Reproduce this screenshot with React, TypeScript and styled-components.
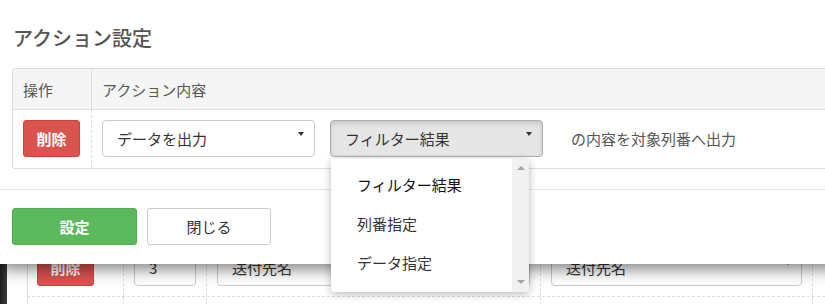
import React from 'react';
import styled, { createGlobalStyle } from 'styled-components';

const GlobalStyle = createGlobalStyle`
  html, body {
    margin: 0;
    padding: 0;
    height: 304px;
    overflow: hidden;
    background: #fff;
    font-family: "Noto Sans CJK JP", "Noto Sans", sans-serif;
  }
  * { box-sizing: border-box; }
`;

/* ---------- page behind the dialog ---------- */

const Page = styled.div`
  position: relative;
  display: flex;
  height: 304px;
  overflow: hidden;
`;

const SideEdge = styled.div`
  width: 7px;
  flex-shrink: 0;
  background: linear-gradient(to right, #1e1e1e, #3b3b3b);
`;

const PageMain = styled.main`
  flex: 1;
  padding: 239px 0 0 20px;
  background: #fff;
`;

const BgRow = styled.div`
  display: grid;
  grid-template-columns: 96px 83px 334px 272px;
  min-height: 57px;
  border-left: 1px solid #ddd;
  border-bottom: 1px dashed #ddd;
`;

const BgCell = styled.div<{ $pad?: number }>`
  padding: 10px ${p => p.$pad ?? 10}px;
  border-right: 1px dashed #ddd;
  display: flex;
  align-items: center;
`;

/* ---------- shared controls ---------- */

const Button = styled.button<{ $kind: 'danger' | 'success' | 'default'; $w: number }>`
  width: ${p => p.$w}px;
  height: 37px;
  padding: 0;
  border-radius: 3px;
  font-family: inherit;
  font-size: 15px;
  font-weight: ${p => (p.$kind === 'default' ? 400 : 700)};
  cursor: pointer;
  color: ${p => (p.$kind === 'default' ? '#333' : '#fff')};
  background: ${p =>
    p.$kind === 'danger' ? '#d9534f' : p.$kind === 'success' ? '#5cb85c' : '#fff'};
  border: 1px solid
    ${p => (p.$kind === 'danger' ? '#d43f3a' : p.$kind === 'success' ? '#4cae4c' : '#ccc')};
`;

const Select = styled.div<{ $w: number; $active?: boolean }>`
  width: ${p => p.$w}px;
  height: 37px;
  display: flex;
  align-items: center;
  justify-content: space-between;
  padding: 0 10px 0 14px;
  font-size: 15px;
  color: #333;
  border-radius: 4px;
  border: 1px solid ${p => (p.$active ? '#adadad' : '#ccc')};
  background: ${p => (p.$active ? '#e6e6e6' : '#fff')};
  box-shadow: ${p => (p.$active ? 'inset 0 3px 5px rgba(0,0,0,.125)' : 'none')};
`;

const Caret = styled.span`
  width: 0;
  height: 0;
  margin-bottom: 10px;
  border-left: 3px solid transparent;
  border-right: 3px solid transparent;
  border-top: 4px solid #333;
`;

const TextInput = styled.div`
  width: 62px;
  height: 37px;
  display: flex;
  align-items: center;
  padding-left: 14px;
  font-size: 15px;
  color: #333;
  border: 1px solid #ccc;
  border-radius: 4px;
  background: #fff;
`;

/* ---------- dialog ---------- */

const Modal = styled.div`
  position: absolute;
  top: 0;
  left: 0;
  width: 880px;
  background: #fff;
  box-shadow: 0 5px 15px rgba(0, 0, 0, 0.5);
  z-index: 5;
`;

const ModalHeader = styled.div`
  padding: 24px 12px 0 13px;
`;

const Title = styled.h4`
  margin: 0;
  font-size: 20px;
  line-height: 28px;
  font-weight: 500;
  color: #555;
`;

const ModalBody = styled.div`
  padding: 16px 0 20px 12px;
`;

const Table = styled.div`
  border: 1px solid #ddd;
  border-radius: 3px;
  display: grid;
  grid-template-columns: 79px 1fr;
`;

const HeadCell = styled.div<{ $first?: boolean }>`
  height: 41px;
  display: flex;
  align-items: center;
  padding-left: 10px;
  font-size: 15px;
  color: #555;
  background: #f5f5f5;
  border-bottom: 1px solid #ddd;
  border-right: ${p => (p.$first ? '1px solid #ddd' : 'none')};
`;

const BodyCell = styled.div<{ $first?: boolean }>`
  display: flex;
  align-items: center;
  gap: 15px;
  padding: 10px 0 11px 10px;
  border-right: ${p => (p.$first ? '1px dashed #ddd' : 'none')};
`;

const Note = styled.span`
  padding-left: 13px;
  font-size: 15px;
  color: #555;
`;

const SelectWrap = styled.div`
  position: relative;
`;

const Listbox = styled.div`
  position: absolute;
  top: calc(100% + 2px);
  left: 1px;
  width: 198px;
  height: 133px;
  display: flex;
  background: #fff;
  border-radius: 0 0 3px 3px;
  box-shadow: 0 2px 8px rgba(0, 0, 0, 0.28);
  overflow: hidden;
  z-index: 10;
`;

const Options = styled.ul`
  flex: 1;
  margin: 0;
  padding: 6px 0 0 26px;
  list-style: none;
`;

const Option = styled.li<{ $selected?: boolean }>`
  height: 39px;
  line-height: 39px;
  font-size: 15px;
  color: ${p => (p.$selected ? '#111' : '#333')};
`;

const ScrollTrack = styled.div`
  width: 17px;
  background: #f1f1f1;
  display: flex;
  flex-direction: column;
  justify-content: space-between;
  align-items: center;
  padding: 7px 0 8px;
`;

const Arrow = styled.span<{ $down?: boolean }>`
  width: 0;
  height: 0;
  border-left: 4px solid transparent;
  border-right: 4px solid transparent;
  ${p => (p.$down ? 'border-top: 4px solid #a3a3a3;' : 'border-bottom: 4px solid #a3a3a3;')}
`;

const ModalFooter = styled.div`
  display: flex;
  gap: 10px;
  padding: 18px 12px 19px;
  border-top: 1px solid #e5e5e5;
`;

const options = ['フィルター結果', '列番指定', 'データ指定'];

const App: React.FC = () => {
  return (
    <Page>
      <GlobalStyle />
      <SideEdge />
      <PageMain>
        <BgRow>
          <BgCell $pad={9}>
            <Button $kind="danger" $w={57}>削除</Button>
          </BgCell>
          <BgCell>
            <TextInput>3</TextInput>
          </BgCell>
          <BgCell>
            <Select $w={313}>送付先名<Caret /></Select>
          </BgCell>
          <BgCell>
            <Select $w={251}>送付先名<Caret /></Select>
          </BgCell>
        </BgRow>
        <BgRow>
          <BgCell />
          <BgCell />
          <BgCell />
          <BgCell />
        </BgRow>
      </PageMain>

      <Modal>
        <ModalHeader>
          <Title>アクション設定</Title>
        </ModalHeader>
        <ModalBody>
          <Table>
            <HeadCell $first>操作</HeadCell>
            <HeadCell>アクション内容</HeadCell>
            <BodyCell $first>
              <Button $kind="danger" $w={57}>削除</Button>
            </BodyCell>
            <BodyCell>
              <Select $w={213}>データを出力<Caret /></Select>
              <SelectWrap>
                <Select $w={213} $active>フィルター結果<Caret /></Select>
                <Listbox>
                  <Options>
                    {options.map((o, i) => (
                      <Option key={o} $selected={i === 0}>{o}</Option>
                    ))}
                  </Options>
                  <ScrollTrack>
                    <Arrow />
                    <Arrow $down />
                  </ScrollTrack>
                </Listbox>
              </SelectWrap>
              <Note>の内容を対象列番へ出力</Note>
            </BodyCell>
          </Table>
        </ModalBody>
        <ModalFooter>
          <Button $kind="success" $w={125}>設定</Button>
          <Button $kind="default" $w={124}>閉じる</Button>
        </ModalFooter>
      </Modal>
    </Page>
  );
};

export default App;
